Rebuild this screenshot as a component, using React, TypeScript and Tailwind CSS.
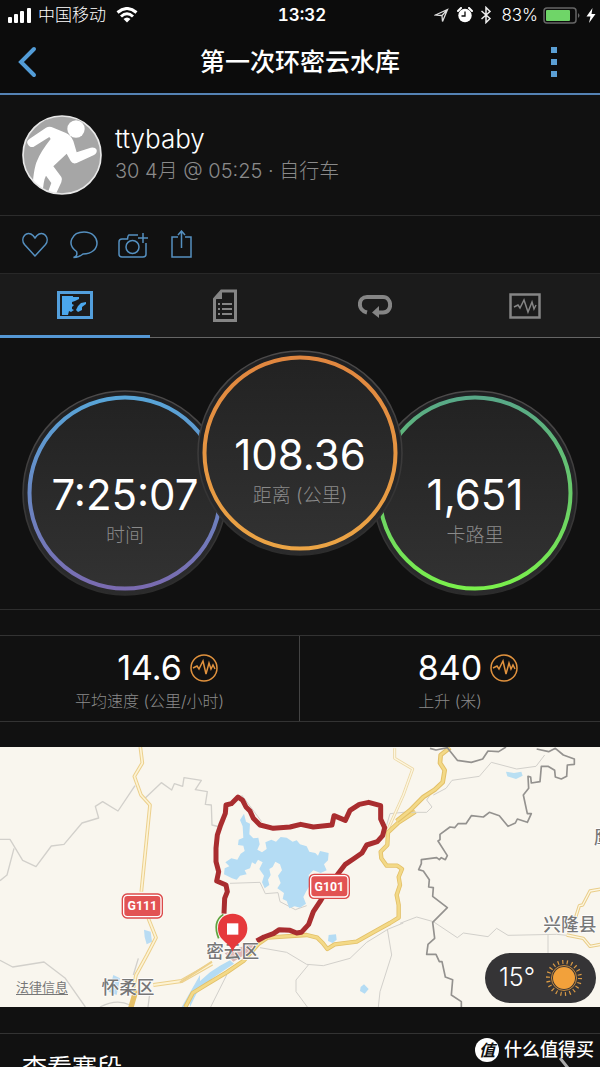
import { ReactNode } from "react";

const PULSE = "M3 14 L7 12 L9 15 L13 7 L16 20 L19 9 L21 15 L23 11 L25 15";

const StatusBar = () => (
  <div className="grid h-[30px] grid-cols-[1fr_auto_1fr] items-center pl-2 pr-1 text-[17px] leading-none">
    <div className="flex items-center gap-[6px]">
      <svg width="24" height="16" viewBox="0 0 24 16" fill="#fff">
        <rect x="0" y="10" width="4" height="6" rx="1" />
        <rect x="6" y="7" width="4" height="9" rx="1" />
        <rect x="12" y="4" width="4" height="12" rx="1" />
        <rect x="19" y="1" width="4" height="15" rx="1" />
      </svg>
      <span className="font-light">中国移动</span>
      <svg className="ml-1" width="22" height="16" viewBox="0 0 22 16" fill="none" stroke="#fff" strokeWidth="3">
        <path d="M1.500 5.500 Q11 -2.500 20.500 5.500" />
        <path d="M5 9.500 Q11 4 17 9.500" />
        <path d="M7.500 12 Q11 9 14.500 12 L11 15.500 Z" fill="#fff" stroke="none" />
      </svg>
    </div>
    <span className="font-semibold tabular-nums">13:32</span>
    <div className="flex items-center justify-end gap-[5px]">
      <svg width="15" height="15" viewBox="0 0 15 15" fill="none" stroke="#ddd" strokeWidth="1.300">
        <path d="M1.500 7 L13.500 1.500 L8.500 13.500 L8 7.500 Z M8 7.500 L13.500 1.500" />
      </svg>
      <svg className="ml-[3px]" width="16" height="16" viewBox="0 0 16 16">
        <circle cx="8" cy="8.500" r="6.700" fill="#fff" />
        <path d="M1 4 L4 1 M15 4 L12 1" stroke="#fff" strokeWidth="2" strokeLinecap="round" />
        <path d="M8 4.500 V9 H4.500" stroke="#0c0c0c" strokeWidth="1.300" fill="none" />
      </svg>
      <svg className="ml-[2px]" width="12" height="18" viewBox="0 0 12 18" fill="none" stroke="#eee" strokeWidth="1.500">
        <path d="M1.500 5 L10 12.500 L6 16.500 V1.500 L10 5.500 L1.500 13" />
      </svg>
      <span className="ml-1 font-light">83%</span>
      <svg width="38" height="17" viewBox="0 0 38 17">
        <rect x="1" y="1" width="32" height="15" rx="3" fill="none" stroke="#666" strokeWidth="1.500" />
        <rect x="3" y="3" width="24" height="11" rx="1" fill="#6fd568" />
        <path d="M35 6 Q38 8.500 35 11 Z" fill="#666" />
      </svg>
      <svg width="10" height="15" viewBox="0 0 10 15" fill="#fff">
        <path d="M6.500 0 L0.500 8.500 H4.500 L3 15 L9.500 6 H5.500 Z" />
      </svg>
    </div>
  </div>
);

const Header = () => (
  <header className="grid h-[65px] grid-cols-[1fr_auto_1fr] items-center border-b-2 border-[#5583b5] px-[18px]">
    <button aria-label="返回" className="justify-self-start">
      <svg width="20" height="32" viewBox="0 0 20 32" fill="none" stroke="#539dd8" strokeWidth="4">
        <path d="M16 3 L3 16 L16 29" strokeLinecap="round" />
      </svg>
    </button>
    <h1 className="text-[25px] font-medium leading-8">第一次环密云水库</h1>
    <button aria-label="更多" className="mr-5 justify-self-end">
      <svg width="16" height="30" viewBox="0 0 16 30" fill="#5b9fd4">
        <rect x="5" y="0" width="6" height="6" />
        <rect x="5" y="12" width="6" height="6" />
        <rect x="5" y="24" width="6" height="6" />
      </svg>
    </button>
  </header>
);

const Profile = () => (
  <section className="flex items-center gap-[13px] border-b border-[#2c2c2c] px-[22px] py-5">
    <svg width="80" height="80" viewBox="0 0 240 240">
      <defs>
        <clipPath id="avatar">
          <circle cx="120" cy="120" r="117" />
        </clipPath>
      </defs>
      <circle cx="120" cy="120" r="117" fill="#a6a6a6" />
      <g clipPath="url(#avatar)" fill="#fff">
        <circle cx="162" cy="42" r="26" />
        <path d="M17 87 Q12 80 22 72 L72 38 Q82 32 94 38 L132 54 Q148 62 154 78 L164 112 L206 98 Q220 96 224 104 Q226 114 216 120 L164 144 Q152 148 146 138 L134 116 L94 154 L118 186 Q122 192 118 202 L102 236 H76 L88 204 L72 182 Q64 196 62 236 L30 236 Q34 160 46 136 Q56 110 86 72 L82 66 L34 96 Q22 98 17 87 Z" />
      </g>
      <circle cx="120" cy="120" r="117" fill="none" stroke="#e8e8e8" strokeWidth="5" />
    </svg>
    <div>
      <p className="text-[26px] font-light leading-8">ttybaby</p>
      <p className="text-xl font-light leading-8 text-[#8a8a8a]">30 4月 @ 05:25 · 自行车</p>
    </div>
  </section>
);

const ActionButton = ({ label, children }: { label: string; children: ReactNode }) => (
  <button aria-label={label}>
    <svg width="30" height="30" viewBox="0 0 30 30" fill="none" stroke="#5590c0" strokeWidth="1.500">
      {children}
    </svg>
  </button>
);

const Actions = () => (
  <div className="flex h-[57px] items-center gap-[19px] px-5">
    <ActionButton label="赞">
      <path d="M15 26 L4.500 14.500 C-0.500 8 7 -0.500 13 5.500 L15 8 L17 5.500 C23 -0.500 30.500 8 25.500 14.500 Z" />
    </ActionButton>
    <ActionButton label="评论">
      <path d="M4.500 27.500 Q9 26 7.500 21.500 C-3 14 3 2 15 2 C32 2 33 24 14 24 Q10 27.500 4.500 27.500 Z" />
    </ActionButton>
    <ActionButton label="添加照片">
      <path d="M20 5 H11 Q10 5 9.500 9 H4 Q1 9 1 12 V24 Q1 27 4 27 H25 Q28 27 28 24 V13" />
      <circle cx="14.500" cy="17" r="6.500" />
      <path d="M25 3 V13 M20 8 H30" />
    </ActionButton>
    <ActionButton label="分享">
      <path d="M11 7 H5 V27 H24 V7 H18 M14.500 18 V1 M11 5 L14.500 1 L18 5" />
    </ActionButton>
  </div>
);

const tabs = [
  {
    label: "概览",
    icon: (
      <svg width="36" height="30" viewBox="0 0 36 30">
        <rect x="1.500" y="2.500" width="33" height="25" fill="none" stroke="#539fdc" strokeWidth="3" />
        <path
          fill="#4ba7ec"
          d="M5 6 H16 V7 H22 V9 L18 11 L15 12 V14 L17 15 L15 17 V19 L17 20 L14 22 L12 21 L11 25 H5 Z M29 12 V14 L25 17 V20 L21 22 L19 20 L21 16 L24 13 Z"
        />
      </svg>
    ),
  },
  {
    label: "详情",
    icon: (
      <svg width="24" height="34" viewBox="0 0 24 34">
        <path d="M1.500 10 L8.500 2 H22.500 V31.500 H1.500 Z" fill="none" stroke="#858585" strokeWidth="3" />
        <path d="M1 10 L9 1 V10 Z" fill="#858585" />
        <path d="M5 15 H7 M9 15 H19 M5 20 H7 M9 20 H19 M5 25 H7 M9 25 H19" stroke="#858585" strokeWidth="2" />
      </svg>
    ),
  },
  {
    label: "计圈",
    icon: (
      <svg width="34" height="24" viewBox="0 0 34 24">
        <path d="M9 18.500 C-1 16 0 3 9 3 H25 C34 3 35 18.500 25 18.500 H20" fill="none" stroke="#858585" strokeWidth="4" />
        <path d="M14 18.500 L21 12 V24 Z" fill="#858585" />
      </svg>
    ),
  },
  {
    label: "图表",
    icon: (
      <svg width="32" height="26" viewBox="0 0 32 26" fill="none" stroke="#858585">
        <rect x="1.500" y="1.500" width="29" height="23" strokeWidth="2.500" />
        <path d="M5 14 L9 12 L11 15 L15 7 L19 19 L23 9 L25 16 L27 12" strokeWidth="1.500" />
      </svg>
    ),
  },
];

const Tabs = () => (
  <nav className="grid h-[65px] grid-cols-4 border-t border-[#282828] bg-[#1b1b1b]">
    {tabs.map((tab, i) => (
      <button
        key={tab.label}
        aria-label={tab.label}
        className={
          i === 0
            ? "flex items-center justify-center border-b-[3px] border-[#5598d5]"
            : "flex items-center justify-center border-b border-[#666]"
        }
      >
        {tab.icon}
      </button>
    ))}
  </nav>
);

type DialProps = {
  id: string;
  value: string;
  label: string;
  from: string;
  to: string;
  className: string;
};

const Dial = ({ id, value, label, from, to, className }: DialProps) => (
  <div className={`relative h-[206px] w-[206px] shrink-0 ${className}`}>
    <svg className="absolute inset-0" width="206" height="206" viewBox="0 0 206 206">
      <defs>
        <linearGradient id={`${id}-ring`} x1="0" y1="0" x2="0" y2="1">
          <stop offset="0" stopColor={from} />
          <stop offset="1" stopColor={to} />
        </linearGradient>
        <linearGradient id={`${id}-face`} x1="0" y1="0" x2="0" y2="1">
          <stop offset="0" stopColor="#222" />
          <stop offset="1" stopColor="#323232" />
        </linearGradient>
        <linearGradient id={`${id}-rim`} x1="0" y1="0" x2="0" y2="1">
          <stop offset="0" stopColor="#4c4a4a" />
          <stop offset="1" stopColor="#2c2c2c" />
        </linearGradient>
        <linearGradient id={`${id}-bezel`} x1="0" y1="0" x2="0" y2="1">
          <stop offset="0" stopColor="#1f2022" />
          <stop offset="1" stopColor="#2b2b2c" />
        </linearGradient>
      </defs>
      <circle cx="103" cy="103" r="102" fill={`url(#${id}-bezel)`} stroke={`url(#${id}-rim)`} strokeWidth="1.500" />
      <circle cx="103" cy="103" r="95.500" fill={`url(#${id}-face)`} stroke={`url(#${id}-ring)`} strokeWidth="4" />
    </svg>
    <div className="relative flex flex-col items-center pt-20">
      <span className="text-[42px] leading-[50px]">{value}</span>
      <span className="text-[19px] font-light leading-8 text-[#8a8a8a]">{label}</span>
    </div>
  </div>
);

const Dials = () => (
  <section className="flex justify-center border-b border-[#2e2e2e] pb-[13px] pt-3">
    <Dial id="time" value="7:25:07" label="时间" from="#58a5d8" to="#7a6bb0" className="mt-10" />
    <Dial id="distance" value="108.36" label="距离 (公里)" from="#e0863f" to="#eba445" className="z-10 -mx-[31px]" />
    <Dial id="calories" value="1,651" label="卡路里" from="#58a888" to="#7af04c" className="mt-10" />
  </section>
);

const Stat = ({ value, label }: { value: string; label: string }) => (
  <div className="pb-[6px] pt-3">
    <div className="grid grid-cols-[1fr_auto_1fr] items-center gap-2">
      <span />
      <span className="text-[34px] leading-10">{value}</span>
      <svg width="28" height="28" viewBox="0 0 28 28" fill="none" stroke="#e0923e">
        <circle cx="14" cy="14" r="13" strokeWidth="1.500" />
        <path d={PULSE} strokeWidth="1.500" />
      </svg>
    </div>
    <p className="text-center text-base font-light leading-[27px] text-[#8a8a8a]">{label}</p>
  </div>
);

const Stats = () => (
  <section className="my-[25px] grid grid-cols-2 divide-x divide-[#444] border-y border-[#333]">
    <Stat value="14.6" label="平均速度 (公里/小时)" />
    <Stat value="840" label="上升 (米)" />
  </section>
);

const RoadSign = ({ x, y, name }: { x: number; y: number; name: string }) => (
  <g transform={`translate(${x} ${y})`}>
    <rect x="-62" y="-38" width="124" height="76" rx="16" fill="#dc4b4b" />
    <rect x="-56" y="-32" width="112" height="64" rx="11" fill="#e25353" stroke="#fff" strokeWidth="4" />
    <text y="13" textAnchor="middle" fontSize="37" fontWeight="700" fill="#fff" fontFamily="Roboto, sans-serif">
      {name}
    </text>
  </g>
);

const VALLEY_ROAD =
  "M-14 786 L8 744 L50 718 L110 682 L160 648 L206 596 L232 578 L350 570 L382 578 L398 594 L412 612 L434 598 L500 590 L560 556 L600 534 L626 518 V480 L620 450 L630 420 L626 396 L636 372 L622 362 H590 L574 340 L572 320 L592 300 L594 262 L626 232 L676 200";

const RouteMap = () => (
  <section className="relative bg-[#f9f6ee]">
    <svg className="block w-full" viewBox="0 0 1800 780" fill="none" strokeLinejoin="round">
      {/* west */}
      <g transform="translate(0 -6)">
        <g stroke="#d2d0cb" strokeWidth="4">
          <path d="M0 283 H30 L68 346 L108 365 L154 303 L192 298 L246 234 L296 219 L286 184 L308 170 L354 198 L405 122" />
          <path d="M42 310 L21 390 L0 407 M435 160 L484 113 L515 135 L523 116 L548 124 L552 98 L604 106 L586 134 L622 140 L616 178 L634 180 L636 240 L660 246" />
          <path d="M0 646 L38 666 L132 651 L196 700 L256 786 M300 786 Q350 760 390 780 M444 786 L450 740 M415 640 L400 690" />
        </g>
        <path d="M432 554 L452 560 L456 590 L440 598 L434 576 Z M340 690 L360 700 L350 750 L326 740 Z M600 690 L545 786 H562 L600 730 Z" fill="#b9dcf3" />
        <path d="M421 6 L427 54 L403 94 L423 150 L450 180 L440 280 L424 440 M445 520 L468 578 L440 632 L408 690 L398 740" stroke="#ecd08c" strokeWidth="11" />
        <path d="M421 6 L427 54 L403 94 L423 150 L450 180 L440 280 L424 440 M445 520 L468 578 L440 632 L408 690 L398 740" stroke="#fdf3d4" strokeWidth="5" />
        <path d="M460 720 L545 708 L636 656" stroke="#ecd08c" strokeWidth="12" />
        <path d="M460 720 L545 708 L636 656" stroke="#fdf3d4" strokeWidth="6" />
        <path d="M408 735 L392 790" stroke="#e5c068" strokeWidth="16" />
      </g>
      {/* reservoir and route */}
      <g transform="translate(570 -6)">
        <g stroke="#d2d0cb" strokeWidth="3">
          <path d="M120 415 L210 412 L226 446 L264 443 L270 470 L316 494 L350 482" />
          <path d="M155 150 L215 230 M210 608 L290 622 L350 658 L400 662 L480 640 L530 592 L595 552 L640 534" />
          <path d="M355 660 L318 705 V740 L352 786 M592 552 L605 630 L570 740 L565 786 M110 690 L62 786 M590 240 L600 206 L660 200" />
        </g>
        <g fill="#b4dcf4">
          <path d="M150 225 L162 206 L168 230 L180 236 L178 268 L190 280 L205 278 L209 298 L202 314 L216 322 L230 312 L226 292 L244 284 L258 290 L272 276 L290 278 L308 290 L320 286 L330 298 L350 304 L358 320 L376 324 L384 332 L390 318 L416 324 L414 346 L402 358 L410 376 L392 384 L370 376 L356 390 L360 420 L348 440 L340 456 L348 476 L330 488 L314 484 L298 490 L290 468 L278 462 L282 444 L262 430 L272 414 L264 392 L276 376 L270 358 L256 350 L248 366 L238 372 L242 390 L234 404 L238 420 L224 430 L216 412 L222 392 L208 372 L218 352 L204 344 L196 358 L186 352 L180 370 L164 376 L170 388 L150 392 L140 404 L126 400 L102 388 L104 370 L118 364 L106 352 L124 340 L142 344 L152 326 L164 318 L160 302 L144 300 L146 284 L160 278 L158 244 Z" />
          <path d="M416 570 L438 568 L440 584 L428 594 L414 588 Z M512 726 L522 718 L536 732 L524 746 L510 738 Z" />
          <path d="M120 646 L90 662 L60 682 L10 726 L0 750 V786 L20 744 L68 700 L96 680 L132 656 Z" />
        </g>
        <path d="M614 10 V40 L668 72 L640 150 L590 262" stroke="#ecd8a6" strokeWidth="9" />
        <path d="M614 10 V40 L668 72 L640 150 L590 262" stroke="#fdf6e0" strokeWidth="4" />
        <path d="M-30 712 L20 680 L66 650" stroke="#ecd08c" strokeWidth="6" />
        <path d={VALLEY_ROAD} stroke="#e3c068" strokeWidth="13" />
        <path d={VALLEY_ROAD} stroke="#f3d987" strokeWidth="8" />
        <path d="M104 625 L170 600 L196 590 L182 618 L130 650 Z" fill="#deb7b4" />
        <path
          d="M102 506 L104 460 L112 440 L108 420 L80 408 L86 380 L78 350 L78 310 L82 270 L92 240 L106 205 L108 180 L124 176 L144 156 L158 166 L168 186 L180 198 L190 220 L210 240 L250 250 L300 246 L332 238 L370 246 L426 240 L432 212 L466 226 L480 196 L508 178 L536 172 L572 182 L572 222 L584 248 L578 272 L562 290 L530 300 L516 324 L490 342 L466 358 L446 384 L420 420 L390 470 L370 500 L356 538 L334 562 L320 564 L300 556 L268 554 L250 566 L222 576 L200 588"
          stroke="#a92d2f"
          strokeWidth="15"
        />
        <text x="128" y="638" textAnchor="middle" fontSize="53" fontWeight="500" fill="#777" stroke="#fff" strokeWidth="4" paintOrder="stroke">
          密云区
        </text>
        <path d="M100 508 Q66 530 86 580" stroke="#5fa33f" strokeWidth="5" />
        <path d="M128 622 C122 592 84 590 84 550 C84 492 172 492 172 550 C172 590 134 592 128 622 Z" fill="#e6393b" />
        <rect x="111" y="535" width="34" height="34" fill="#fff" />
      </g>
      {/* east */}
      <g transform="translate(1200 -6)">
        <g stroke="#d2d0cb" strokeWidth="3">
          <path d="M100 150 L138 130 L156 106 L238 94 L274 52 L350 72 L408 64 L434 30 M90 150 L80 165 L96 186 L80 202 H20" />
          <path d="M0 535 L50 516 L100 530 L172 578 L190 564 L264 575 L290 550 L324 571 L470 568 L510 572 M444 570 V640" />
        </g>
        <path d="M604 432 L570 438 L548 480 L538 482 L526 520 M500 570 L550 580 L570 604 L602 598" stroke="#e9cd89" strokeWidth="10" />
        <path d="M604 432 L570 438 L548 480 L538 482 L526 520 M500 570 L550 580 L570 604 L602 598" stroke="#fdf6e0" strokeWidth="4" />
        <path d="M318 80 L342 84 L364 80 L368 92 L348 102 L322 94 Z" fill="#b9dff2" />
        <path d="M150 8 L122 30 L120 54 L134 76 L128 112 L104 134 L70 156 L30 196 L-10 228" stroke="#e3c068" strokeWidth="14" />
        <path d="M150 8 L122 30 L120 54 L134 76 L128 112 L104 134 L70 156 L30 196 L-10 228" stroke="#f3d987" strokeWidth="8" />
        <path
          d="M90 10 L108 15 L142 8 L172 46 L214 52 L248 42 L264 18 L296 20 L318 6 M410 12 L446 20 L466 10 L490 30 L523 42 V58 L502 60 L500 94 L484 102 L466 96 L464 76 L444 64 H424 L420 110 L394 114 L392 96 L384 94 L386 130 L370 150 L382 206 H394 L382 232 L352 222 L346 234 L324 244 L298 212 L268 202 L250 216 L214 212 L198 236 H174 L164 248 L150 246 L120 268 V284 L114 288 L142 332 L136 344 L124 338 L118 344 L110 338 L64 344 V356 L56 374 L70 378 L88 404 L86 426 L100 428 L98 454 L142 488 L98 532 L104 580 L84 598 L80 628 H108 L118 650 H126 L136 696 L158 704 L154 750 L184 770 V786"
          stroke="#94928f"
          strokeWidth="5"
        />
        <g fontSize="53" fontWeight="500" fill="#777" stroke="#fff" strokeWidth="4" paintOrder="stroke">
          <text x="430" y="558">兴隆县</text>
          <text x="582" y="298">鹰</text>
        </g>
      </g>
      <text x="384" y="740" textAnchor="middle" fontSize="53" fontWeight="500" fill="#777" stroke="#fff" strokeWidth="4" paintOrder="stroke">
        怀柔区
      </text>
      <RoadSign x={427} y={477} name="G111" />
      <RoadSign x={988} y={418} name="G101" />
    </svg>
    <a href="#legal" className="absolute bottom-3 left-4 text-[13px] leading-4 text-[#777] underline underline-offset-2">
      法律信息
    </a>
    <div className="absolute bottom-1 right-1 flex h-[50px] w-[111px] items-center justify-between rounded-full bg-[#353436] pl-[14px] pr-[13px]">
      <span className="text-[25px] font-light">15°</span>
      <svg width="38" height="38" viewBox="0 0 38 38">
        <circle cx="19" cy="19" r="11" fill="#f2a13b" />
        <circle cx="19" cy="19" r="12.500" fill="none" stroke="#c58a3f" strokeWidth="1" />
        <circle cx="19" cy="19" r="16" fill="none" stroke="#d99a45" strokeWidth="4" strokeDasharray="1.200 3.369" />
      </svg>
    </div>
  </section>
);

const Watermark = () => (
  <div className="absolute bottom-[5px] right-[6px] flex items-center gap-[5px]">
    <span className="flex h-6 w-6 items-center justify-center rounded-full bg-white text-base font-bold italic leading-none text-[#111]">
      值
    </span>
    <span className="text-[18px] font-medium leading-6">什么值得买</span>
  </div>
);

const App = () => {
  return (
    <div className="relative h-screen overflow-hidden bg-[#111] font-['Inter','Noto_Sans_CJK_SC',sans-serif] text-white">
      <div className="bg-[#0c0c0c]">
        <StatusBar />
        <Header />
      </div>
      <Profile />
      <Actions />
      <Tabs />
      <Dials />
      <Stats />
      <RouteMap />
      <a
        href="#segments"
        className="mt-[26px] flex items-center justify-between border-t border-[#333] px-[22px] py-4 text-[25px] leading-9"
      >
        查看赛段
        <svg className="mr-2" width="12" height="24" viewBox="0 0 12 24" fill="none" stroke="#aaa" strokeWidth="3">
          <path d="M2 2 L10 12 L2 22" />
        </svg>
      </a>
      <Watermark />
    </div>
  );
};

export default App;
